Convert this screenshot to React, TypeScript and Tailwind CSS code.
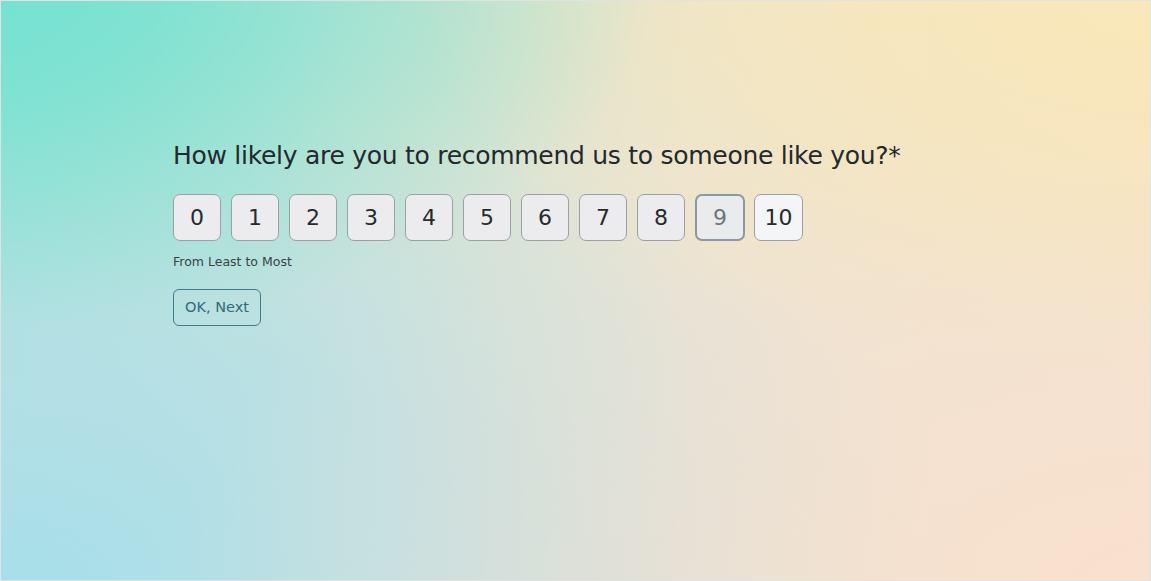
const scores = [0, 1, 2, 3, 4, 5, 6, 7, 8, 9, 10];

export default function App() {
  return (
    <div
      className="relative h-[581px] w-[1151px] overflow-hidden border border-[#e2e2e2] bg-[#ece3d6] font-['DejaVu_Sans',Tahoma,sans-serif] text-[#262b2e]"
    >
      {/* soft mesh gradient backdrop */}
      <div className="absolute inset-0 bg-[linear-gradient(90deg,#7fe3d3_0%,#c6e4d2_30%,#ebe4cc_60%,#f6e3c3_100%)]" />
      <div className="absolute inset-0 bg-[linear-gradient(180deg,rgba(255,255,255,0)_0%,rgba(236,228,220,0.55)_55%,rgba(240,226,214,0.9)_100%)]" />
      <div className="absolute inset-0 bg-[radial-gradient(ellipse_at_0%_100%,#a6dfea_0%,rgba(170,222,234,0.65)_30%,rgba(170,222,234,0)_60%)]" />
      <div className="absolute inset-0 bg-[radial-gradient(ellipse_at_100%_100%,#f8e1ce_0%,rgba(248,225,206,0)_60%)]" />
      <div className="absolute inset-0 bg-[radial-gradient(ellipse_at_100%_0%,#f9e8b8_0%,rgba(249,232,184,0)_45%)]" />
      <div className="absolute inset-0 bg-[radial-gradient(ellipse_at_0%_0%,#78e2d2_0%,rgba(120,226,210,0)_40%)]" />

      <div className="relative pl-[172px] pt-[138px]">
        <h1 className="text-[25px] leading-[34px] tracking-[-0.28px] text-[#23292c]">
          How likely are you to recommend us to someone like you?*
        </h1>

        <div className="mt-[21px] flex gap-[10px]">
          {scores.map((n) => (
            <button
              key={n}
              className={
                n === 9
                  ? 'flex h-[47px] w-[50px] items-center justify-center rounded-[7px] border-2 border-[#8b99a6] bg-[#eaebed] text-[22px] text-[#6f757a]'
                  : n === 10
                  ? '-ml-[1px] flex h-[47px] w-[49px] items-center justify-center rounded-[7px] border border-[#9aa0a6] bg-[#f4f5f7] text-[22px] text-[#262b2e]'
                  : 'flex h-[47px] w-[48px] items-center justify-center rounded-[7px] border border-[#9aa0a6] bg-[#ececee] text-[22px] text-[#262b2e]'
              }
            >
              {n}
            </button>
          ))}
        </div>

        <p className="mt-[12px] text-[12.5px] leading-[18px] text-[#3b4246]">From Least to Most</p>

        <button className="mt-[18px] flex h-[37px] items-center rounded-[6px] border border-[#3f7d8c] px-[11px] text-[14.5px] text-[#2f6b7b]">
          OK, Next
        </button>
      </div>
    </div>
  );
}
